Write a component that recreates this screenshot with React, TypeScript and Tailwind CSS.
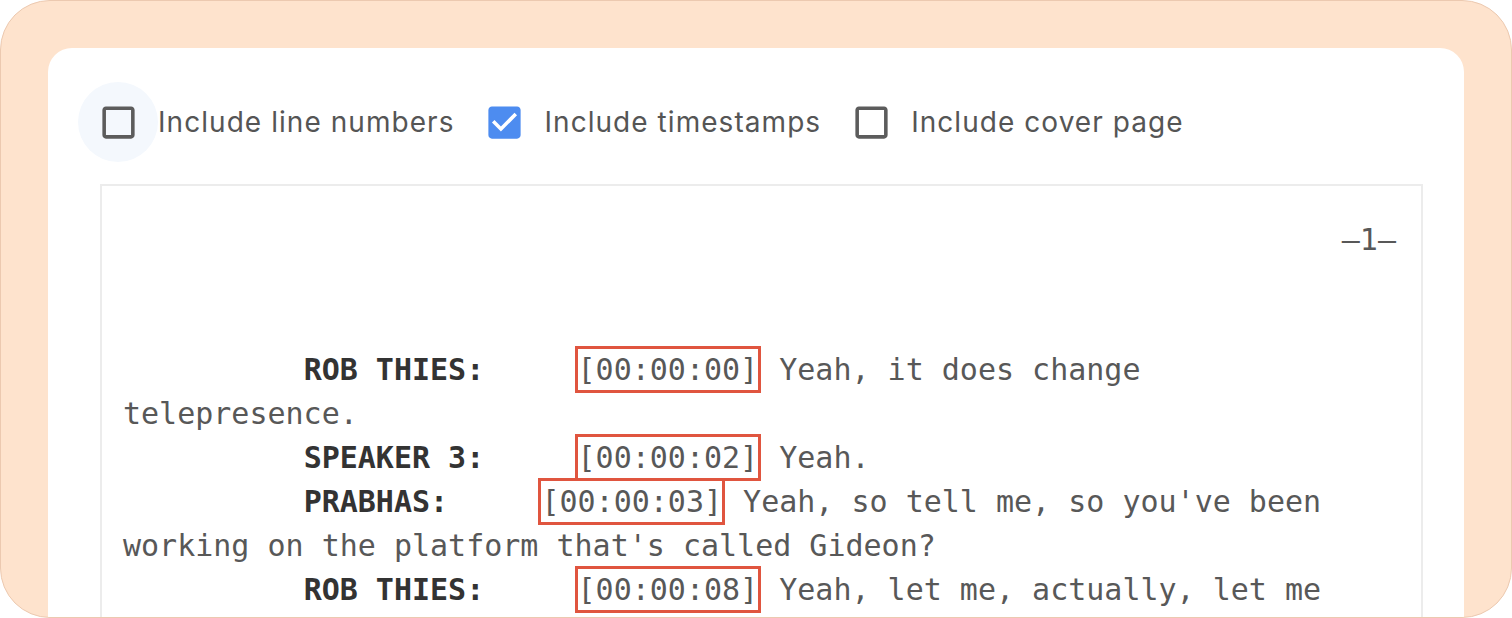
import { type ReactNode } from "react";

const mono = { fontFamily: '"DejaVu Sans Mono", "Liberation Mono", monospace' };

function CheckIcon({ checked }: { checked: boolean }) {
  return checked ? (
    <svg width="43" height="43" viewBox="0 0 24 24" fill="#4d8cf0">
      <path d="M19 3H5c-1.11 0-2 .9-2 2v14c0 1.1.89 2 2 2h14c1.1 0 2-.9 2-2V5c0-1.1-.89-2-2-2z" />
      <path d="M10 17l-5-5 1.41-1.41L10 14.17l7.59-7.59L19 8l-9 9z" fill="#ffffff" />
    </svg>
  ) : (
    <svg width="43" height="43" viewBox="0 0 24 24" fill="#5c5c5c">
      <path d="M19 5v14H5V5h14m0-2H5c-1.11 0-2 .9-2 2v14c0 1.1.89 2 2 2h14c1.1 0 2-.9 2-2V5c0-1.1-.9-2-2-2z" />
    </svg>
  );
}

function Option({ label, checked, hover }: { label: string; checked: boolean; hover?: boolean }) {
  return (
    <label className="flex items-center">
      <span
        className={
          "flex h-[80px] w-[80px] items-center justify-center rounded-full " +
          (hover ? "bg-[#f4f8fd]" : "")
        }
      >
        <CheckIcon checked={checked} />
      </span>
      <span
        className="text-[28px] leading-none tracking-[1.05px] text-[#555555]"
        style={{ fontFamily: "Inter, sans-serif" }}
      >
        {label}
      </span>
    </label>
  );
}

function Stamp({ children }: { children: ReactNode }) {
  return <span className="border-[3px] border-[#e0553f] py-[3px]">{children}</span>;
}

function SpeakerLine({ name, pad, time, text }: { name: string; pad: string; time: string; text: string }) {
  return (
    <div className="whitespace-pre">
      {"          "}
      <b className="font-bold text-[#333333]">{name}</b>
      {pad}
      <Stamp>{time}</Stamp>
      {" " + text}
    </div>
  );
}

export default function App() {
  return (
    <div className="h-[618px] w-[1512px] overflow-hidden rounded-[50px] border border-[#ecc9b0] bg-[#fee3cd] p-[47px]">
      <div className="h-[700px] w-[1416px] rounded-t-[24px] bg-white pt-[34px]">
        <div className="flex gap-[10px] pl-[30px]">
          <Option label="Include line numbers" checked={false} hover />
          <Option label="Include timestamps" checked />
          <Option label="Include cover page" checked={false} />
        </div>
        <div
          className="ml-[52px] mt-[22px] h-[600px] w-[1323px] border-2 border-[#ececec] px-[21px] pt-[32px] text-[30px] leading-[44px] text-[#585858]"
          style={mono}
        >
          <div className="whitespace-pre pr-[4px] text-right">—1—</div>
          <div className="mt-[86px]">
            <SpeakerLine name="ROB THIES:" pad="     " time="[00:00:00]" text="Yeah, it does change" />
            <div className="whitespace-pre">telepresence.</div>
            <SpeakerLine name="SPEAKER 3:" pad="     " time="[00:00:02]" text="Yeah." />
            <SpeakerLine name="PRABHAS:" pad="     " time="[00:00:03]" text="Yeah, so tell me, so you've been" />
            <div className="whitespace-pre">working on the platform that's called Gideon?</div>
            <SpeakerLine name="ROB THIES:" pad="     " time="[00:00:08]" text="Yeah, let me, actually, let me" />
          </div>
        </div>
      </div>
    </div>
  );
}
